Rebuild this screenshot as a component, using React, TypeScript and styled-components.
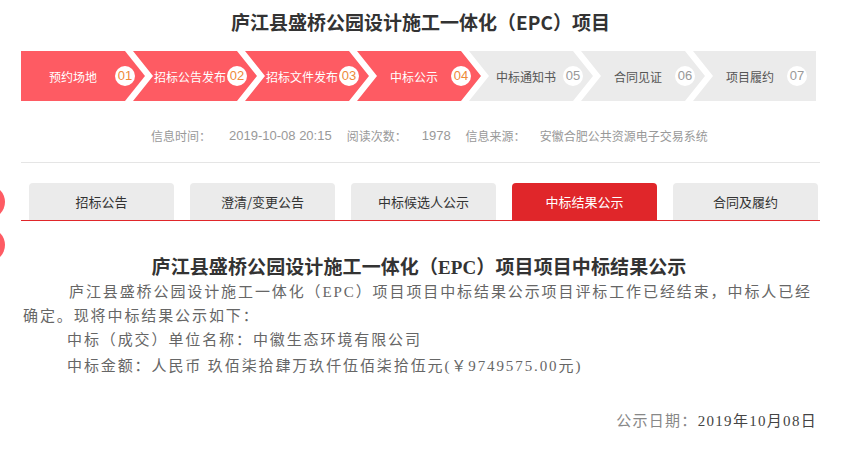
import React from 'react';
import styled, { createGlobalStyle } from 'styled-components';

const GlobalStyle = createGlobalStyle`
  html, body {
    margin: 0;
    padding: 0;
    background: #fff;
    font-family: "Noto Sans CJK SC", "Liberation Sans", sans-serif;
  }
`;

const Page = styled.div`
  position: relative;
  width: 799px;
  margin-left: 21px;
  padding-top: 10px;
`;

const Heading = styled.h1`
  margin: 0;
  height: 41px;
  line-height: 24px;
  text-align: center;
  font-size: 19px;
  font-weight: 700;
  color: #333;
`;

const StepBar = styled.div`
  display: flex;
  width: 795px;
  height: 50px;
`;

const Step = styled.div<{ $active: boolean; $first: boolean; $last: boolean }>`
  display: flex;
  align-items: center;
  flex: 0 0 ${p => (p.$last ? 123 : 124)}px;
  margin-left: ${p => (p.$first ? 0 : -12)}px;
  padding-left: ${p => (p.$first ? 0 : 10)}px;
  box-sizing: border-box;
  background: ${p => (p.$active ? '#fe5b63' : '#ebebeb')};
  color: ${p => (p.$active ? '#fff' : '#555')};
  font-size: 12px;
  clip-path: ${p =>
    p.$last
      ? 'polygon(0 0, 100% 0, 100% 100%, 0 100%, 20px 50%)'
      : p.$first
        ? 'polygon(0 0, 104px 0, 124px 50%, 104px 100%, 0 100%)'
        : 'polygon(0 0, 104px 0, 124px 50%, 104px 100%, 0 100%, 20px 50%)'};
`;

const StepLabel = styled.span<{ $first: boolean }>`
  flex: 0 0 ${p => (p.$first ? 104 : 94)}px;
  text-align: center;
  white-space: nowrap;
`;

const StepNum = styled.span<{ $active: boolean }>`
  flex: 0 0 20px;
  height: 20px;
  margin-left: -10px;
  border-radius: 50%;
  background: #fff;
  color: ${p => (p.$active ? '#ee8a3a' : '#999')};
  font-family: "Liberation Sans", sans-serif;
  font-size: 13px;
  line-height: 20px;
  text-align: center;
`;

const InfoRow = styled.div`
  display: flex;
  padding-left: 130px;
  margin-top: 25px;
  height: 20px;
  line-height: 20px;
  font-size: 12px;
  color: #999;
`;

const InfoLabel = styled.span<{ $gap: number }>`
  margin-right: ${p => p.$gap}px;
`;

const InfoValue = styled.span<{ $num?: boolean }>`
  margin-right: 15px;
  font-family: ${p => (p.$num ? '"Liberation Sans", sans-serif' : 'inherit')};
  font-size: ${p => (p.$num ? 13 : 12)}px;
  &:last-child {
    margin-right: 0;
  }
`;

const Divider = styled.hr`
  margin: 16px 0 0;
  border: 0;
  border-top: 1px solid #e5e5e5;
`;

const TabBar = styled.div`
  display: flex;
  gap: 16px;
  margin-top: 20px;
  padding-left: 8px;
  border-bottom: 1px solid #e0262a;
`;

const Tab = styled.div<{ $active: boolean }>`
  width: 145px;
  height: 37px;
  line-height: 37px;
  text-align: center;
  border-radius: 4px 4px 0 0;
  background: ${p => (p.$active ? '#e0262a' : '#ebebeb')};
  color: ${p => (p.$active ? '#fff' : '#333')};
  font-size: 13px;
`;

const Article = styled.div`
  margin-top: 35px;
  font-family: "Liberation Serif", "Noto Sans CJK SC", serif;
  color: #666;
`;

const ArticleTitle = styled.h2`
  margin: 0;
  padding-right: 3px;
  line-height: 24px;
  text-align: center;
  font-size: 19px;
  font-weight: 700;
  letter-spacing: 0.1px;
  color: #333;
`;

const Para = styled.p<{ $indent: number }>`
  margin: 0;
  padding-left: 2px;
  font-size: 15px;
  letter-spacing: 1.9px;
  line-height: 24px;
  text-indent: ${p => p.$indent}px;
  white-space: nowrap;
`;

const DateLine = styled.p`
  margin: 31px 0 0;
  padding-right: 3px;
  text-align: right;
  font-size: 15px;
  letter-spacing: 1.3px;
  line-height: 24px;
  color: #444;
`;

const DateLabel = styled.span`
  color: #888;
`;

const SideDot = styled.div<{ $top: number }>`
  position: absolute;
  left: -50px;
  top: ${p => p.$top}px;
  width: 34px;
  height: 34px;
  border-radius: 50%;
  background: #fe5b63;
`;

const steps = ['预约场地', '招标公告发布', '招标文件发布', '中标公示', '中标通知书', '合同见证', '项目履约'];
const tabs = ['招标公告', '澄清/变更公告', '中标候选人公示', '中标结果公示', '合同及履约'];

export default function App() {
  return (
    <>
      <GlobalStyle />
      <Page>
        <SideDot $top={185} />
        <SideDot $top={228} />
        <Heading>庐江县盛桥公园设计施工一体化（EPC）项目</Heading>
        <StepBar>
          {steps.map((s, i) => (
            <Step key={s} $active={i < 4} $first={i === 0} $last={i === steps.length - 1}>
              <StepLabel $first={i === 0}>{s}</StepLabel>
              <StepNum $active={i < 4}>{String(i + 1).padStart(2, '0')}</StepNum>
            </Step>
          ))}
        </StepBar>
        <InfoRow>
          <InfoLabel $gap={18}>信息时间：</InfoLabel>
          <InfoValue $num>2019-10-08 20:15</InfoValue>
          <InfoLabel $gap={15}>阅读次数：</InfoLabel>
          <InfoValue $num>1978</InfoValue>
          <InfoLabel $gap={14}>信息来源：</InfoLabel>
          <InfoValue>安徽合肥公共资源电子交易系统</InfoValue>
        </InfoRow>
        <Divider />
        <TabBar>
          {tabs.map((t, i) => (
            <Tab key={t} $active={i === 3}>{t}</Tab>
          ))}
        </TabBar>
        <Article>
          <ArticleTitle>庐江县盛桥公园设计施工一体化（EPC）项目项目中标结果公示</ArticleTitle>
          <Para $indent={46}>
            庐江县盛桥公园设计施工一体化（EPC）项目项目中标结果公示项目评标工作已经结束，中标人已经
            <br />
            确定。现将中标结果公示如下：
          </Para>
          <Para $indent={44}>中标（成交）单位名称：中徽生态环境有限公司</Para>
          <Para $indent={44} style={{ marginTop: 2 }}>中标金额：人民币 玖佰柒拾肆万玖仟伍佰柒拾伍元(￥9749575.00元)</Para>
          <DateLine>
            <DateLabel>公示日期：</DateLabel>2019年10月08日
          </DateLine>
        </Article>
      </Page>
    </>
  );
}
